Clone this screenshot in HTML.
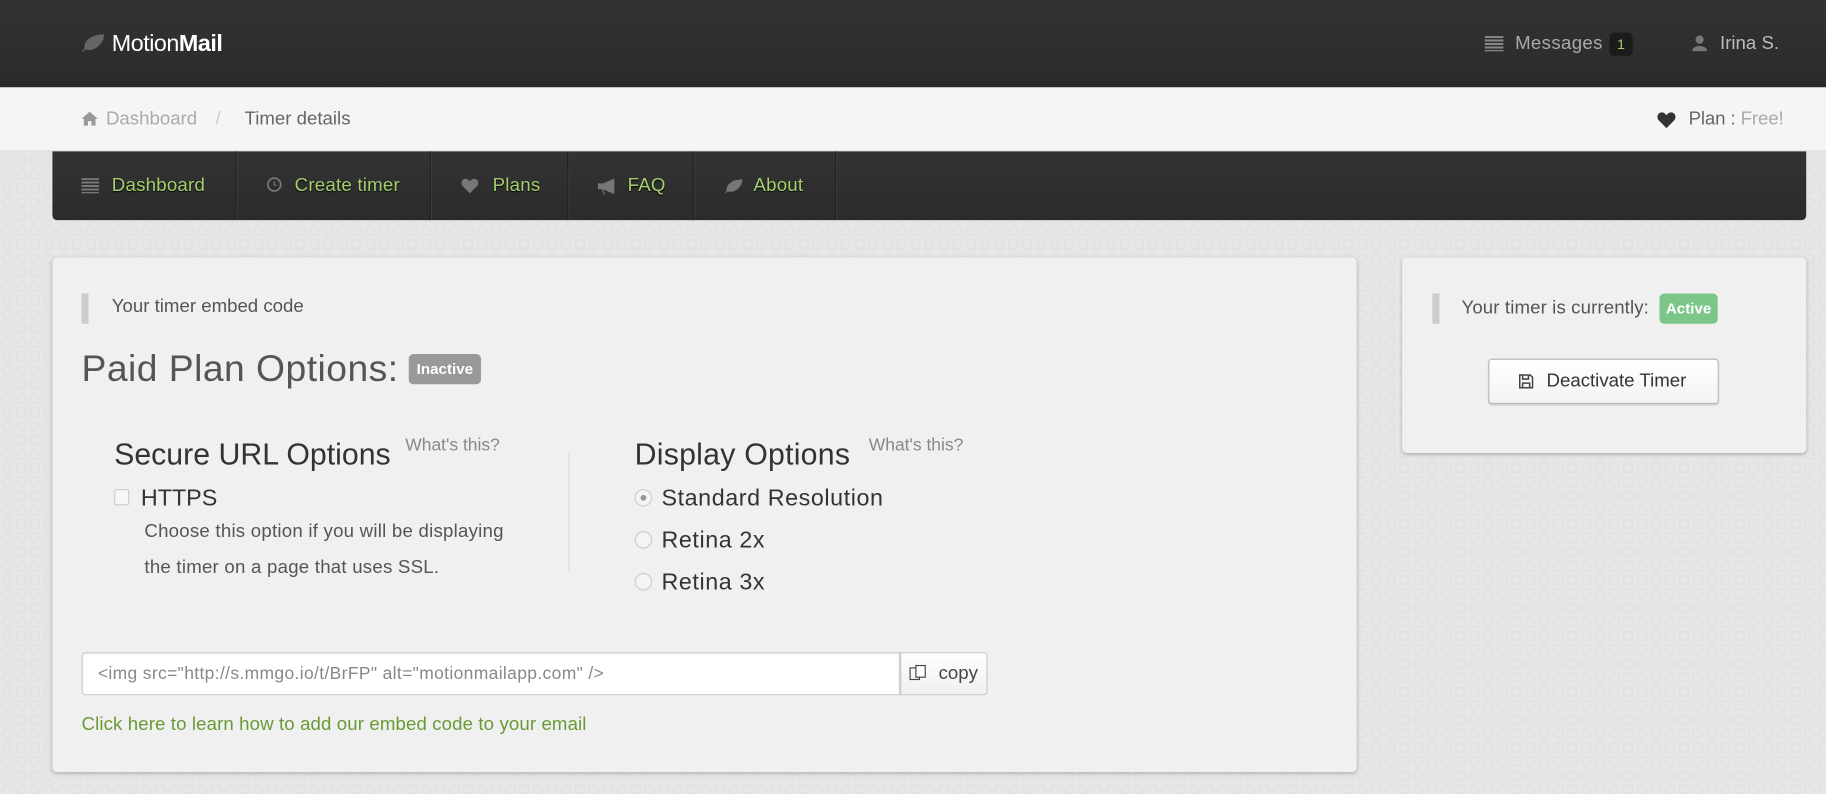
<!DOCTYPE html>
<html><head><meta charset="utf-8"><style>
html,body{margin:0;padding:0;width:1826px;height:794px;overflow:hidden;background:#e5e5e5;}
#w{position:absolute;left:0;top:0;width:1568px;height:682px;transform:scale(1.16454);transform-origin:0 0;font-family:"Liberation Sans",sans-serif;
background-color:#e6e6e6;background-image:radial-gradient(circle,transparent 3px,#e0e0e0 3.5px,#e0e0e0 4.2px,transparent 4.8px);background-size:12px 12px;}
.a{position:absolute;white-space:nowrap;}
.top{position:absolute;left:0;top:0;width:1568px;height:75px;background:linear-gradient(#333,#2a2a2a);}
.crumb{position:absolute;left:0;top:75px;width:1568px;height:54px;background:#f5f5f5;border-bottom:1px solid #e0e0e0;}
.nav{position:absolute;left:45px;top:130px;width:1506px;height:59px;background:linear-gradient(#333,#2b2b2b);border-radius:0 0 4px 4px;}
.sep{position:absolute;top:0;width:1px;height:59px;background:#222;box-shadow:1px 0 0 #3c3c3c;}
.nav .t{color:#a6d06e;font-size:16px;top:21px;text-shadow:0 1px 1px #000;letter-spacing:0.2px}
.card{position:absolute;background:#f0f0f0;border-radius:4px;box-shadow:0 1px 3px rgba(0,0,0,.25);}
.bq{position:absolute;width:6px;background:#ccc;}
.radio{position:absolute;width:13px;height:13px;border-radius:50%;border:1px solid #ccc;background:#f4f4f4;}
.r{letter-spacing:0.5px}
</style></head><body><div id="w">
<div class="top">
 <svg class="a" style="left:70px;top:29px" width="20" height="16" viewBox="0 0 20 16"><path d="M1 15 C5 10 9 7 14 5 M3 13 C2 6 9 1 19 1 C18 9 11 15 3 13Z" fill="#666" stroke="#666" stroke-width="1"/></svg>
 <div class="a" style="left:96px;top:27px;font-size:20px;color:#fff;letter-spacing:-0.4px">Motion<b>Mail</b></div>
 <div class="a" style="left:1275px;top:31px;width:16px;height:13px;background:repeating-linear-gradient(#888 0 1.5px,transparent 1.5px 3px)"></div>
 <div class="a" style="left:1301px;top:29px;font-size:16px;color:#aaa;letter-spacing:0.3px">Messages</div>
 <div class="a" style="left:1382px;top:28px;width:20px;height:20px;background:#1b1b1b;border-radius:4px;color:#a6d06e;font-size:12px;text-align:center;line-height:20px">1</div>
 <svg class="a" style="left:1453px;top:30px" width="13" height="14" viewBox="0 0 13 14"><circle cx="6.5" cy="4" r="3.5" fill="#777"/><path d="M0 14 C0 8 13 8 13 14Z" fill="#777"/></svg>
 <div class="a" style="left:1477px;top:29px;font-size:16px;color:#bbb">Irina S.</div>
</div>
<div class="crumb">
 <svg class="a" style="left:70px;top:21px" width="14" height="12" viewBox="0 0 14 12"><path d="M7 0 L14 6 H12 V12 H8.5 V8 H5.5 V12 H2 V6 H0Z" fill="#999"/></svg>
 <div class="a" style="left:91px;top:19px;font-size:16px;color:#aaa">Dashboard</div>
 <div class="a" style="left:185px;top:19px;font-size:16px;color:#ccc">/</div>
 <div class="a" style="left:210px;top:19px;font-size:16px;color:#666">Timer details</div>
 <svg class="a" style="left:1423px;top:21px" width="16" height="14" viewBox="0 0 16 14"><path d="M8 14 L1.5 7.5 C-1 5 0.5 0.5 4 0.5 C6 0.5 7.3 2 8 3 C8.7 2 10 0.5 12 0.5 C15.5 0.5 17 5 14.5 7.5Z" fill="#333"/></svg>
 <div class="a" style="left:1450px;top:19px;font-size:16px;color:#666;letter-spacing:-0.1px">Plan : <span style="color:#aaa">Free!</span></div>
</div>
<div class="nav">
 <div class="a" style="left:25px;top:23px;width:15px;height:13px;background:repeating-linear-gradient(#777 0 1.5px,transparent 1.5px 3px)"></div>
 <div class="a t" style="left:51px">Dashboard</div>
 <div class="sep" style="left:157px"></div>
 <svg class="a" style="left:184px;top:22px" width="13" height="13"><circle cx="6.5" cy="6.5" r="5.5" fill="none" stroke="#777" stroke-width="1.5"/><path d="M6.5 3.5V7H8.5" stroke="#777" fill="none"/></svg>
 <div class="a t" style="left:208px">Create timer</div>
 <div class="sep" style="left:324px"></div>
 <svg class="a" style="left:351px;top:23px" width="15" height="13" viewBox="0 0 16 14"><path d="M8 14 L1.5 7.5 C-1 5 0.5 0.5 4 0.5 C6 0.5 7.3 2 8 3 C8.7 2 10 0.5 12 0.5 C15.5 0.5 17 5 14.5 7.5Z" fill="#777"/></svg>
 <div class="a t" style="left:378px">Plans</div>
 <div class="sep" style="left:442px"></div>
 <svg class="a" style="left:468px;top:23px" width="16" height="14" viewBox="0 0 16 14"><path d="M1 5 H5 L14 1 V13 L5 9 H1Z M4 9 L6 14" fill="#777" stroke="#777"/></svg>
 <div class="a t" style="left:494px">FAQ</div>
 <div class="sep" style="left:550px"></div>
 <svg class="a" style="left:577px;top:23px" width="16" height="14" viewBox="0 0 20 16"><path d="M1 15 C5 10 9 7 14 5 M3 13 C2 6 9 1 19 1 C18 9 11 15 3 13Z" fill="#777" stroke="#777"/></svg>
 <div class="a t" style="left:602px">About</div>
 <div class="sep" style="left:672px"></div>
</div>

<div class="card" style="left:45px;top:221px;width:1120px;height:442px">
 <div class="bq" style="left:25px;top:31px;height:26px"></div>
 <div class="a" style="left:51px;top:34px;font-size:16px;color:#555">Your timer embed code</div>
 <div class="a" style="left:25px;top:77px;font-size:32px;color:#555;letter-spacing:0.4px">Paid Plan Options:</div>
 <div class="a" style="left:306px;top:83px;width:62px;height:26px;background:#999;border-radius:4px;color:#fff;font-size:13px;font-weight:bold;text-align:center;line-height:26px">Inactive</div>
 <div class="a" style="left:53px;top:154px;font-size:26px;color:#333">Secure URL Options</div>
 <div class="a" style="left:303px;top:153px;font-size:15px;color:#888">What's this?</div>
 <div class="a" style="left:443px;top:167px;width:1px;height:102px;background:#ddd"></div>
 <div class="a" style="left:53px;top:199px;width:11px;height:12px;border:1px solid #ccc;border-radius:2px;background:#f6f6f6"></div>
 <div class="a" style="left:76px;top:196px;font-size:20px;color:#333">HTTPS</div>
 <div class="a" style="left:79px;top:220px;font-size:16px;color:#555;line-height:31px;letter-spacing:0.2px">Choose this option if you will be displaying<br>the timer on a page that uses SSL.</div>
 <div class="a" style="left:500px;top:154px;font-size:26px;color:#333;letter-spacing:0.2px">Display Options</div>
 <div class="a" style="left:701px;top:153px;font-size:15px;color:#888">What's this?</div>
 <div class="radio" style="left:500px;top:199px"><div style="position:absolute;left:4px;top:4px;width:5px;height:5px;border-radius:50%;background:#999"></div></div>
 <div class="a r" style="left:523px;top:196px;font-size:20px;color:#333">Standard Resolution</div>
 <div class="radio" style="left:500px;top:235px"></div>
 <div class="a r" style="left:523px;top:232px;font-size:20px;color:#333">Retina 2x</div>
 <div class="radio" style="left:500px;top:271px"></div>
 <div class="a r" style="left:523px;top:268px;font-size:20px;color:#333">Retina 3x</div>
 <div class="a" style="left:25px;top:339px;width:701px;height:35px;border:1px solid #ccc;border-radius:3px 0 0 3px;background:#fff;box-shadow:inset 0 1px 2px rgba(0,0,0,.08)"></div>
 <div class="a" style="left:39px;top:349px;font-size:15px;color:#888;letter-spacing:0.3px">&lt;img src="http://s.mmgo.io/t/BrFP" alt="motionmailapp.com" /&gt;</div>
 <div class="a" style="left:728px;top:339px;width:73px;height:35px;border:1px solid #ccc;border-radius:0 3px 3px 0;background:linear-gradient(#fff,#f0f0f0)"></div>
 <svg class="a" style="left:735px;top:349px" width="16" height="16"><rect x="1.5" y="3.5" width="8" height="10" fill="none" stroke="#444"/><rect x="6.5" y="1.5" width="8" height="10" fill="#fff" stroke="#444"/></svg>
 <div class="a" style="left:761px;top:349px;font-size:16px;color:#444">copy</div>
 <div class="a" style="left:25px;top:393px;font-size:16px;color:#6a9a35;letter-spacing:0.1px">Click here to learn how to add our embed code to your email</div>
</div>

<div class="card" style="left:1204px;top:221px;width:347px;height:168px">
 <div class="bq" style="left:26px;top:31px;height:26px"></div>
 <div class="a" style="left:51px;top:35px;font-size:16px;color:#555;letter-spacing:0.1px">Your timer is currently:</div>
 <div class="a" style="left:221px;top:31px;width:50px;height:26px;background:#7cc68a;border-radius:4px;color:#fff;font-size:13px;font-weight:bold;text-align:center;line-height:26px">Active</div>
 <div class="a" style="left:74px;top:87px;width:196px;height:37px;border:1px solid #bbb;border-radius:3px;background:linear-gradient(#fff,#f3f3f3);box-shadow:0 1px 1px rgba(0,0,0,.15)"></div>
 <svg class="a" style="left:100px;top:100px" width="13" height="13"><path d="M1 1H10L12 3V12H1Z M3.5 1V4.5H8.5V1 M3.5 12V8H9.5V12" fill="none" stroke="#444" stroke-width="1.3"/></svg>
 <div class="a" style="left:124px;top:98px;font-size:16px;color:#333">Deactivate Timer</div>
</div>
</div></body></html>
